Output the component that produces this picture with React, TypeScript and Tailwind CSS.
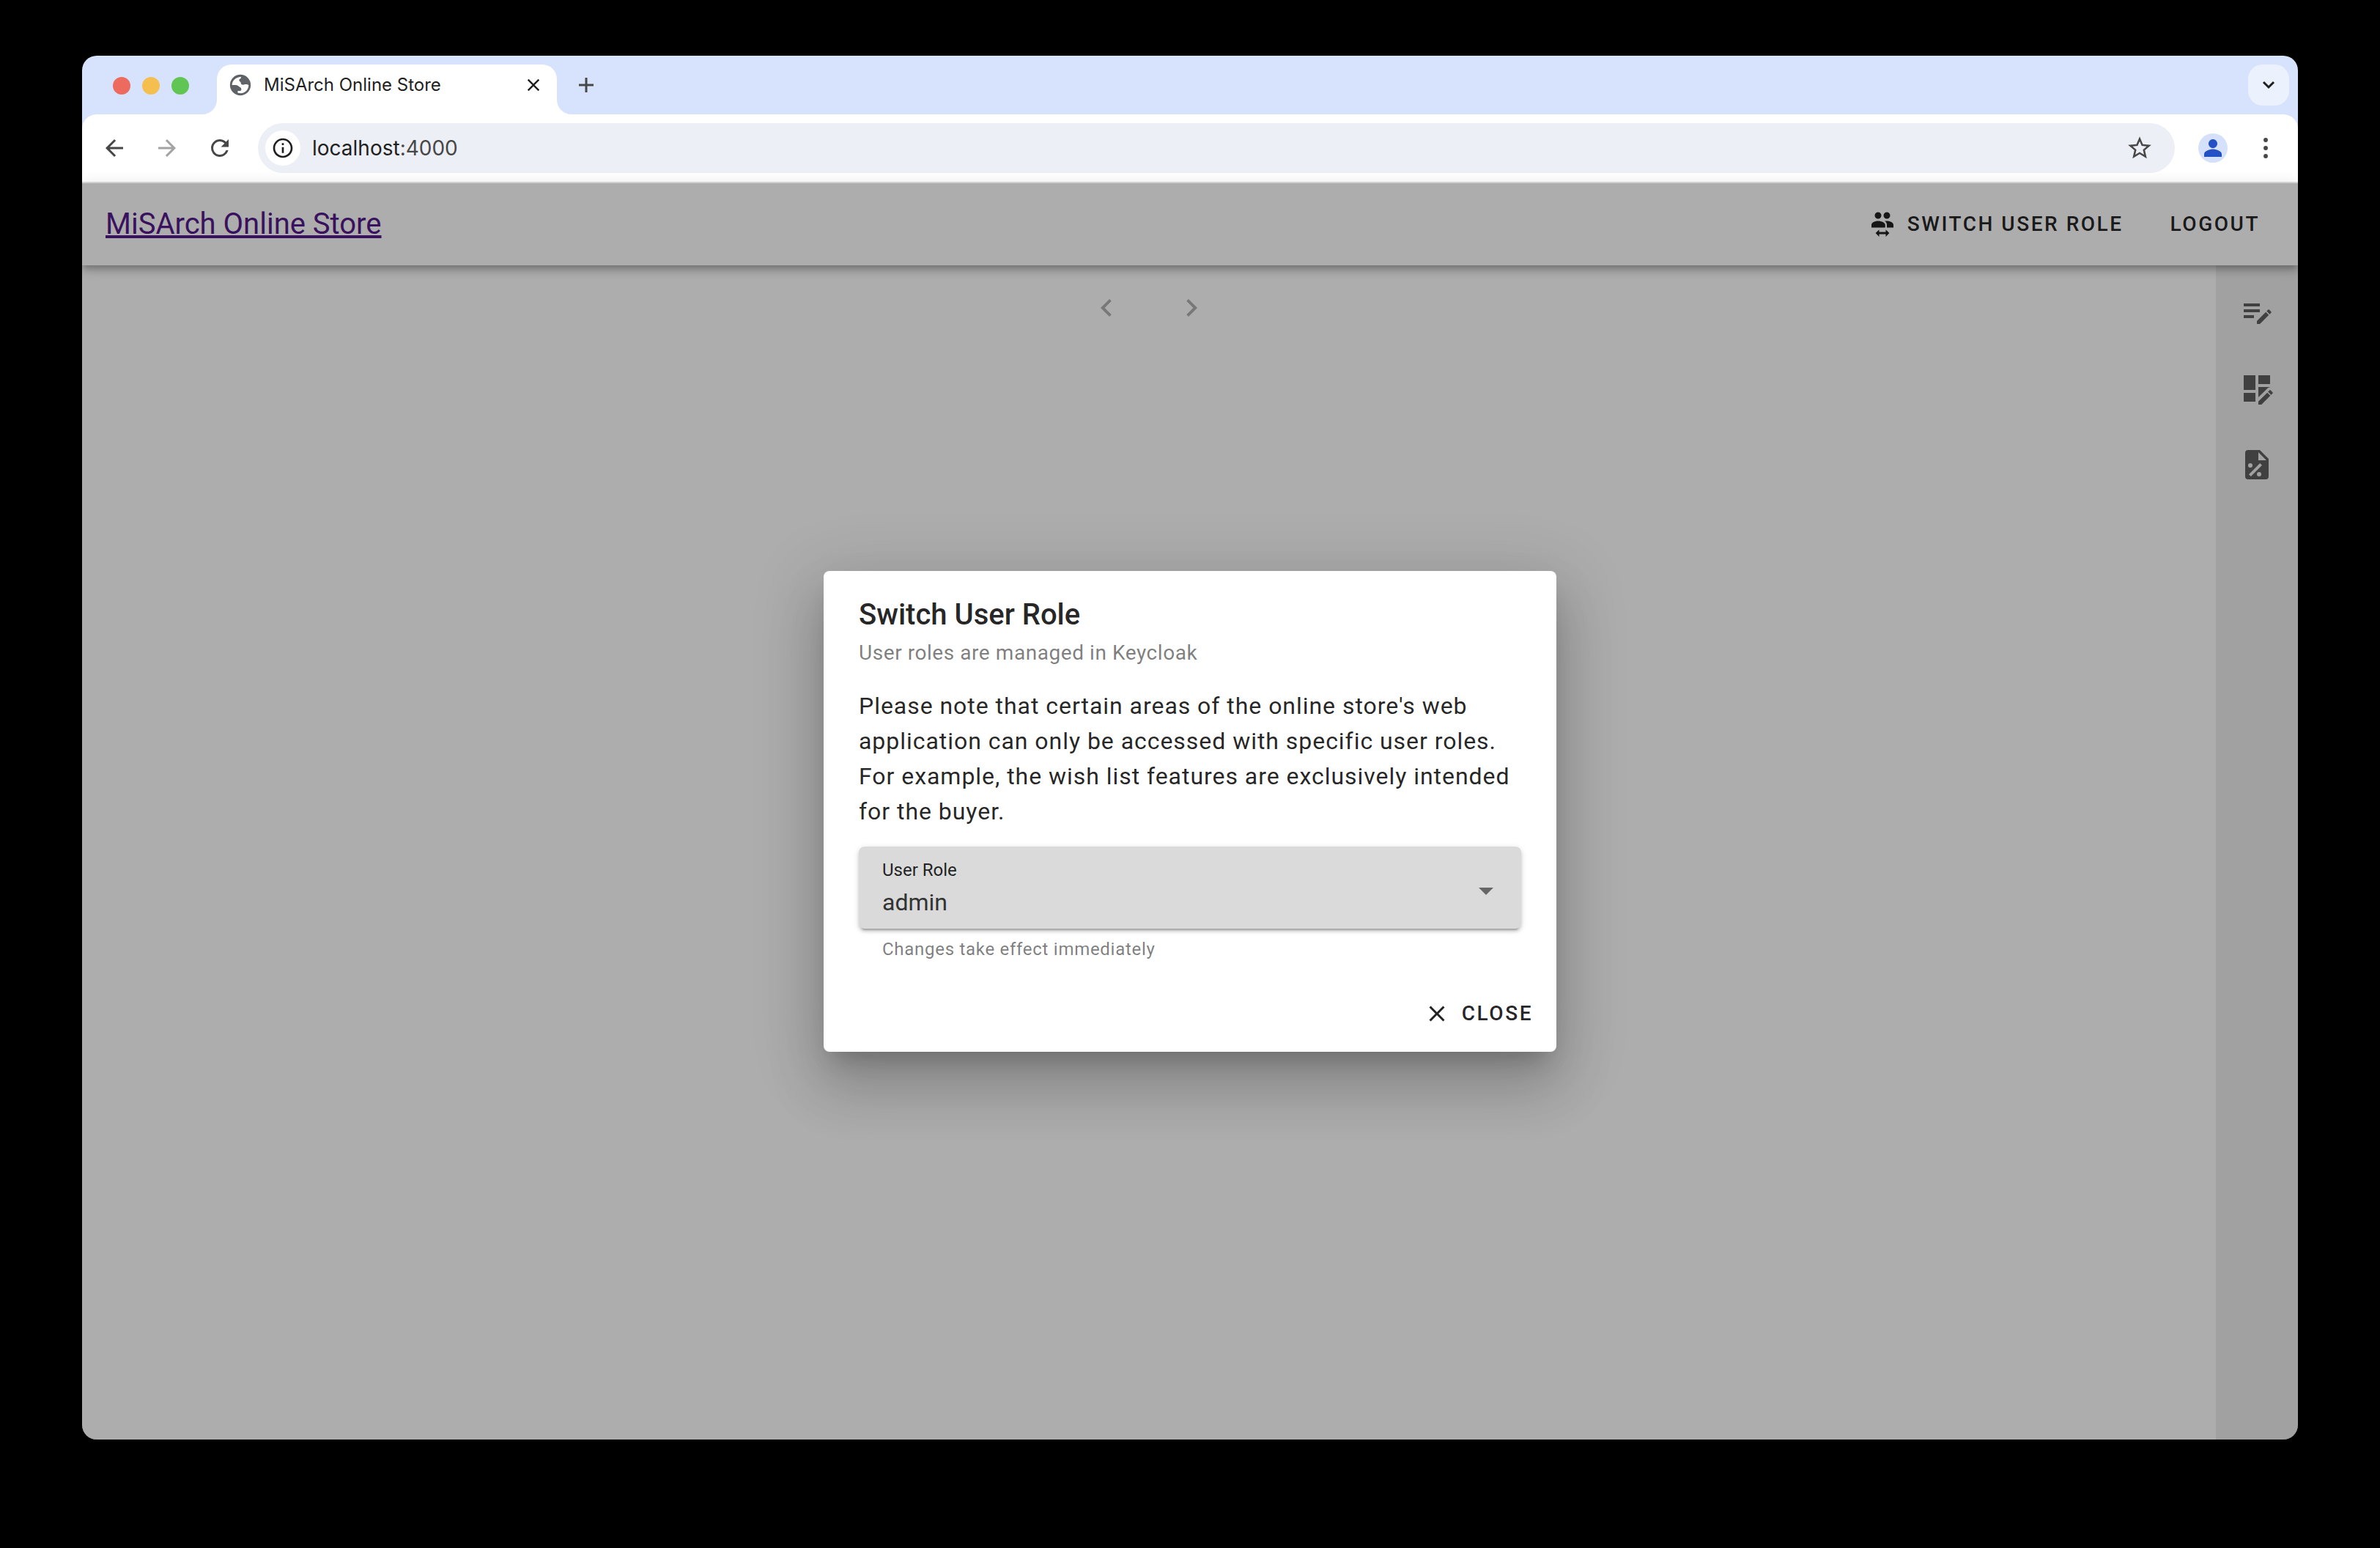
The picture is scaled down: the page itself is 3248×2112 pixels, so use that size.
import { useState } from 'react';
import type { ReactNode } from 'react';

const LIST_EDIT =
  'M3 6V8H14V6H3M3 10V12H14V10H3M20.04 10.13C19.9 10.13 19.76 10.19 19.65 10.3L18.65 11.3L20.7 13.35L21.7 12.35C21.92 12.14 21.92 11.79 21.7 11.58L20.42 10.3C20.31 10.19 20.18 10.13 20.04 10.13M18.07 11.88L12 17.94V20H14.06L20.12 13.93L18.07 11.88M3 14V16H10V14H3Z';
const DASHBOARD_EDIT =
  'M21 13.1C20.9 13.1 20.7 13.2 20.6 13.3L19.6 14.3L21.7 16.4L22.7 15.4C22.9 15.2 22.9 14.8 22.7 14.6L21.4 13.3C21.3 13.2 21.2 13.1 21 13.1M19.1 14.9L13 20.9V23H15.1L21.2 16.9L19.1 14.9M21 3H13V9H21V3M13 18.06V11H21V11.1C20.24 11.1 19.57 11.5 19.19 11.89L18.07 13L17.73 13.33L13 18.06M11 3H3V13H11V3M11 21V15H3V21H11Z';
const FILE_PERCENT =
  'M6 2A2 2 0 0 0 4 4V20A2 2 0 0 0 6 22H18A2 2 0 0 0 20 20V8L14 2H6M13 3.5L18.5 9H13V3.5M7.5 11A1.5 1.5 0 0 1 9 12.5A1.5 1.5 0 0 1 7.5 14A1.5 1.5 0 0 1 6 12.5A1.5 1.5 0 0 1 7.5 11M14.1 11L15.5 12.4L7.9 20L6.5 18.6L14.1 11M13.5 17A1.5 1.5 0 0 1 15 18.5A1.5 1.5 0 0 1 13.5 20A1.5 1.5 0 0 1 12 18.5A1.5 1.5 0 0 1 13.5 17Z';
const ACCOUNT_SWITCH =
  'M16 9C18.33 9 22 10.17 22 12.5V15H16V12.5C16 11 15.19 9.89 14.04 9.05L16 9M8 9C10.33 9 14.500 10.17 14.500 12.5V15H2V12.5C2 10.17 5.67 9 8 9M8 7A3 3 0 0 1 5 4A3 3 0 0 1 8 1A3 3 0 0 1 11 4A3 3 0 0 1 8 7M16 7A3 3 0 0 1 13 4A3 3 0 0 1 16 1A3 3 0 0 1 19 4A3 3 0 0 1 16 7M9 16.75V19H15V16.75L18.25 20L15 23.25V21H9V23.25L5.75 20L9 16.75Z';
const CLOSE =
  'M19 6.41L17.59 5L12 10.59L6.41 5L5 6.41L10.59 12L5 17.59L6.41 19L12 13.41L17.59 19L19 17.59L13.41 12L19 6.41Z';
const CHEVRON_LEFT = 'M15.41 16.58L10.83 12L15.41 7.41L14 6L8 12L14 18L15.41 16.58Z';
const CHEVRON_RIGHT = 'M8.59 16.58L13.17 12L8.59 7.41L10 6L16 12L10 18L8.59 16.58Z';
const ARROW_BACK = 'M20 11H7.83l5.59-5.59L12 4l-8 8 8 8 1.41-1.41L7.83 13H20v-2z';
const ARROW_FORWARD = 'M12 4l-1.41 1.41L16.17 11H4v2h12.17l-5.58 5.59L12 20l8-8z';
const REFRESH =
  'M17.65 6.35A7.96 7.96 0 0 0 12 4a8 8 0 1 0 7.73 10h-2.08A6 6 0 1 1 12 6c1.66 0 3.14.69 4.22 1.78L13 11h7V4l-2.35 2.35z';
const STAR =
  'M22 9.24l-7.19-.62L12 2 9.19 8.63 2 9.24l5.46 4.73L5.82 21 12 17.27 18.18 21l-1.63-7.03L22 9.24zM12 15.4l-3.76 2.27 1-4.28-3.32-2.88 4.38-.38L12 6.1l1.71 4.04 4.38.38-3.32 2.88 1 4.28L12 15.4z';
const INFO =
  'M11 7h2v2h-2zm0 4h2v6h-2zm1-9C6.48 2 2 6.48 2 12s4.48 10 10 10 10-4.48 10-10S17.52 2 12 2zm0 18c-4.41 0-8-3.59-8-8s3.59-8 8-8 8 3.59 8 8-3.59 8-8 8z';
const GLOBE =
  'M12 2A10 10 0 1 0 12 22A10 10 0 1 0 12 2ZM4 12C4 8 7.5 4.3 12.6 4V5C12.6 6.2 10.8 6 10.8 7.4C10.8 8.7 12.5 8.6 12.5 10C12.5 11.8 14.5 12 16 11.5C17.5 11 19 11.5 20 12C20 16 17 19.8 12.5 20L9.5 19.6V17.600H12C13.200 17.400 13.200 15.400 12.400 14.700L9.500 12.500C8 11.900 6 12 4 12Z';
const MORE =
  'M12 7.600a1.600 1.600 0 1 0 0-3.200 1.600 1.600 0 0 0 0 3.200zm0 2.800a1.600 1.600 0 1 0 0 3.200 1.600 1.600 0 0 0 0-3.200zm0 6a1.600 1.600 0 1 0 0 3.200 1.600 1.600 0 0 0 0-3.200z';
const PERSON =
  'M12 12c2.210 0 4-1.790 4-4s-1.790-4-4-4-4 1.790-4 4 1.790 4 4 4zm0 1c-2.670 0-8 1.500-8 4.500v2.500h16v-2.500c0-3-5.330-4.500-8-4.500z';

function Icon({ d, className }: { d: string; className: string }) {
  return (
    <svg viewBox="0 0 24 24" fill="currentColor" fillRule="evenodd" aria-hidden="true" className={`shrink-0 ${className}`}>
      <path d={d} />
    </svg>
  );
}

function IconButton({ label, className, children }: { label: string; className: string; children: ReactNode }) {
  return (
    <button type="button" aria-label={label} className={`flex shrink-0 items-center justify-center ${className}`}>
      {children}
    </button>
  );
}

function TabStrip() {
  return (
    <div className="flex h-20 items-end bg-[#d7e2fc] pr-3">
      <div className="flex h-full items-center gap-4 pt-0.5 pl-[42px]">
        <span className="size-6 rounded-full bg-[#ed6a5e]" />
        <span className="size-6 rounded-full bg-[#f5bf4f]" />
        <span className="size-6 rounded-full bg-[#61c554]" />
      </div>
      <svg viewBox="0 0 20 20" className="ml-[18px] size-5 text-white" aria-hidden="true">
        <path d="M20 0V20H0A20 20 0 0 0 20 0Z" fill="currentColor" />
      </svg>
      <div className="flex h-[68px] w-[464px] items-center rounded-t-[20px] bg-white pr-5 pb-3 pl-[15px]">
        <Icon d={GLOBE} className="size-[34px] text-[#5f6368]" />
        <span className="ml-[15px] flex-1 text-2xl text-[#1f1f1f]">MiSArch Online Store</span>
        <IconButton label="Close tab" className="size-6 text-[#1f1f1f]">
          <Icon d={CLOSE} className="size-7" />
        </IconButton>
      </div>
      <svg viewBox="0 0 20 20" className="size-5 text-white" aria-hidden="true">
        <path d="M0 0V20H20A20 20 0 0 1 0 0Z" fill="currentColor" />
      </svg>
      <div className="flex h-full flex-1 items-center justify-between">
        <IconButton label="New tab" className="size-10 text-[#474747]">
          <svg viewBox="0 0 24 24" className="size-6" stroke="currentColor" strokeWidth="3" aria-hidden="true">
            <path d="M12 2V22M2 12H22" />
          </svg>
        </IconButton>
        <IconButton label="Search tabs" className="size-14 rounded-[20px] bg-[#ecf2fd] text-[#1f1f1f]">
          <svg viewBox="0 0 24 24" className="size-6" fill="none" stroke="currentColor" strokeWidth="3" aria-hidden="true">
            <path d="M5 8L12 15L19 8" />
          </svg>
        </IconButton>
      </div>
    </div>
  );
}

function Toolbar() {
  return (
    <div className="bg-[#d7e2fc]">
      <div className="flex h-[94px] items-center rounded-t-[20px] border-b-2 border-[#dcdcdc] bg-white pr-6 pl-7">
        <IconButton label="Back" className="size-8 text-[#474747]">
          <Icon d={ARROW_BACK} className="size-9" />
        </IconButton>
        <IconButton label="Forward" className="ml-10 size-8 text-[#a3a3a3]">
          <Icon d={ARROW_FORWARD} className="size-9" />
        </IconButton>
        <IconButton label="Reload" className="ml-10 size-8 text-[#474747]">
          <Icon d={REFRESH} className="size-9" />
        </IconButton>
        <div className="ml-9 flex h-[68px] flex-1 items-center rounded-full bg-[#edeff6] pr-8 pl-2.5">
          <IconButton label="Site information" className="size-12 rounded-full bg-white text-[#1f1f1f]">
            <Icon d={INFO} className="size-8" />
          </IconButton>
          <a href="#" className="ml-4 flex-1 text-[28px] text-[#1f1f1f]">
            localhost<span className="text-[#474747]">:4000</span>
          </a>
          <IconButton label="Bookmark this tab" className="size-8 text-[#474747]">
            <Icon d={STAR} className="size-[38px]" />
          </IconButton>
        </div>
        <IconButton label="Profile" className="ml-8 size-10 rounded-full bg-[#d5e1fb] text-[#2350c4]">
          <Icon d={PERSON} className="size-9" />
        </IconButton>
        <IconButton label="Browser menu" className="ml-8 size-10 text-[#474747]">
          <Icon d={MORE} className="size-11" />
        </IconButton>
      </div>
    </div>
  );
}

function StorePage() {
  return (
    <div className="flex flex-1 flex-col">
      <header className="z-10 flex h-28 items-center bg-white pr-5 pl-8 text-black/87 shadow-[0_4px_8px_-2px_rgba(0,0,0,0.2),0_8px_10px_0_rgba(0,0,0,0.14),0_2px_20px_0_rgba(0,0,0,0.12)]">
        <a href="#" className="flex-1 text-[40px] text-[#551a8b] underline">
          MiSArch Online Store
        </a>
        <button type="button" className="flex h-18 items-center gap-4 px-8 text-[28px] font-medium tracking-[0.09em] uppercase">
          <Icon d={ACCOUNT_SWITCH} className="size-9" />
          Switch user role
        </button>
        <button type="button" className="flex h-18 items-center px-8 text-[28px] font-medium tracking-[0.09em] uppercase">
          Logout
        </button>
      </header>
      <div className="flex flex-1">
        <main className="flex flex-1 items-start justify-center gap-5 bg-white pt-2.5 text-black/30">
          <IconButton label="Previous page" className="size-24">
            <Icon d={CHEVRON_LEFT} className="size-12" />
          </IconButton>
          <IconButton label="Next page" className="size-24">
            <Icon d={CHEVRON_RIGHT} className="size-12" />
          </IconButton>
        </main>
        <nav className="flex w-28 flex-col items-center gap-14 bg-[#ededed] pt-10 text-[#5f5f5f]">
          <a href="#" aria-label="Edit list">
            <Icon d={LIST_EDIT} className="size-12" />
          </a>
          <a href="#" aria-label="Edit dashboard">
            <Icon d={DASHBOARD_EDIT} className="size-12" />
          </a>
          <a href="#" aria-label="Discounts">
            <Icon d={FILE_PERCENT} className="size-12" />
          </a>
        </nav>
      </div>
    </div>
  );
}

function RoleDialog() {
  const [role, setRole] = useState('admin');
  return (
    <section
      role="dialog"
      aria-labelledby="dialog-title"
      className="w-[1000px] rounded-lg bg-white text-black/87 shadow-[0_22px_30px_-14px_rgba(0,0,0,0.2),0_48px_76px_6px_rgba(0,0,0,0.14),0_18px_92px_16px_rgba(0,0,0,0.12)]"
    >
      <div className="px-12 pt-7">
        <h2 id="dialog-title" className="text-[40px] leading-[64px] font-medium">
          Switch User Role
        </h2>
        <p className="text-[28px] leading-10 tracking-[0.02em] text-black/52">User roles are managed in Keycloak</p>
        <p className="pt-7 text-[32px] leading-12 tracking-[0.03em]">
          Please note that certain areas of the online store's web application can only be accessed with specific
          user roles. For example, the wish list features are exclusively intended for the buyer.
        </p>
        <div className="relative mt-6 rounded-lg bg-[#dadada] shadow-[0_6px_2px_-4px_rgba(0,0,0,0.2),0_4px_4px_0_rgba(0,0,0,0.14),0_2px_10px_0_rgba(0,0,0,0.12)]">
          <label htmlFor="role" className="absolute top-4 left-8 text-2xl leading-8">
            User Role
          </label>
          <select
            id="role"
            value={role}
            onChange={(e) => setRole(e.target.value)}
            aria-describedby="role-hint"
            className="block h-28 w-full appearance-none rounded-lg bg-transparent px-8 pt-10 text-[32px] text-[#333333]"
          >
            <option>admin</option>
            <option>buyer</option>
            <option>employee</option>
          </select>
          <svg
            viewBox="0 0 20 10"
            fill="currentColor"
            aria-hidden="true"
            className="pointer-events-none absolute top-1/2 right-[38px] w-5 text-[#666666]"
          >
            <path d="M0 0H20L10 10Z" />
          </svg>
        </div>
        <p id="role-hint" className="px-8 pt-3 text-2xl leading-8 tracking-[0.03em] text-black/52">
          Changes take effect immediately
        </p>
      </div>
      <div className="flex justify-end px-4 pt-9 pb-4">
        <button type="button" className="flex h-18 items-center gap-4 px-4 text-[28px] font-medium tracking-[0.09em] uppercase">
          <Icon d={CLOSE} className="size-9" />
          Close
        </button>
      </div>
    </section>
  );
}

export default function App() {
  return (
    <div className="flex min-h-screen flex-col bg-black px-28 pt-19 pb-37 font-[Inter,sans-serif]">
      <div className="flex flex-1 flex-col overflow-hidden rounded-[20px]">
        <TabStrip />
        <Toolbar />
        <div className="relative flex flex-1 flex-col font-[Roboto,sans-serif]">
          <StorePage />
          <div className="absolute inset-0 z-20 flex items-center justify-center bg-black/32">
            <RoleDialog />
          </div>
        </div>
      </div>
    </div>
  );
}
